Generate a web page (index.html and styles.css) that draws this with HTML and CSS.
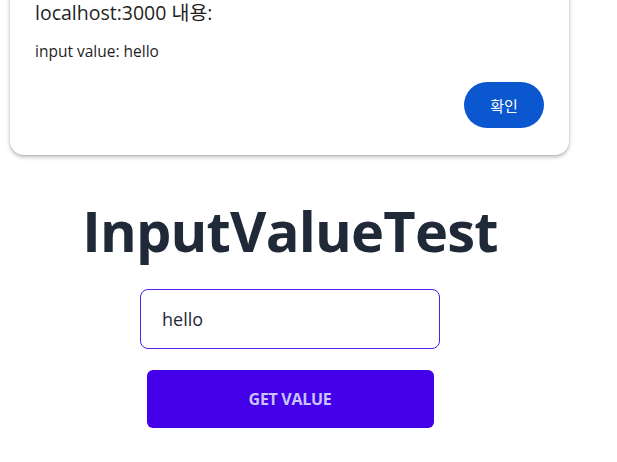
FILE: index.html
```html
<!DOCTYPE html>
<html lang="ko">
<head>
<meta charset="utf-8">
<link rel="stylesheet" href="styles.css">
</head>
<body>
<div class="dialog">
  <div class="dialog-title">localhost:3000 내용:</div>
  <div class="dialog-msg">input value: hello</div>
  <div class="dialog-actions"><button class="ok-btn">확인</button></div>
</div>
<main class="main">
  <h1 class="heading">InputValueTest</h1>
  <input class="field" type="text" value="hello">
  <button class="get-btn">GET VALUE</button>
</main>
</body>
</html>
```
FILE: styles.css
```css
html, body { margin: 0; padding: 0; background: #fff; }
body { font-family: "Open Sans", "Noto Sans", "Noto Sans CJK KR", sans-serif; width: 617px; height: 462px; overflow: hidden; }
.dialog {
  margin: -30px 0 0 10px;
  width: 559px;
  box-sizing: border-box;
  padding: 30px 25px 27px 25px;
  background: #fff;
  border-radius: 14px;
  box-shadow: 0 2px 4px rgba(0,0,0,0.25), 0 1px 2px rgba(0,0,0,0.1);
}
.dialog-title { font-size: 19.5px; line-height: 26px; color: #1f1f1f; }
.dialog-msg { font-size: 15.5px; line-height: 22px; color: #1f1f1f; margin-top: 14px; }
.dialog-actions { display: flex; justify-content: flex-end; margin-top: 20px; }
.ok-btn {
  width: 80px; height: 46px; border: 0; border-radius: 23px;
  background: #0b57d0; color: #fff; font-size: 15px;
  font-family: "Noto Sans CJK KR", sans-serif;
}
.main { width: 580px; display: flex; flex-direction: column; align-items: center; }
.heading {
  margin: 36px 0 0 0;
  font-size: 56px; line-height: 78px; font-weight: 700; color: #1f2937;
  letter-spacing: -0.8px;
}
.field {
  margin-top: 20px;
  width: 300px; height: 60px; box-sizing: border-box;
  border: 1px solid #4f1ff0; border-radius: 8px;
  padding: 0 21px; font-size: 18px; color: #1f2937;
  font-family: "Open Sans", sans-serif; outline: none;
}
.get-btn {
  margin-top: 21px;
  width: 287px; height: 58px; border: 0; border-radius: 6px;
  background: #4400e8; color: #c9c3ff;
  font-family: "Open Sans", sans-serif; font-weight: 700; font-size: 16px;
  letter-spacing: -0.3px;
}
```
